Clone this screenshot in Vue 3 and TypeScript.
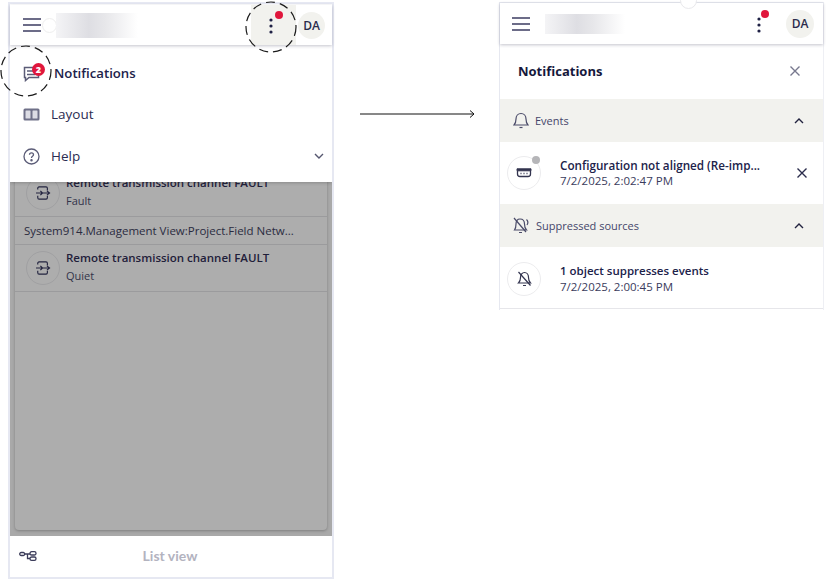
<script setup lang="ts">
const listRows = [
  { kind: 'item', title: 'Remote transmission channel FAULT', sub: 'Fault' },
  { kind: 'group', title: 'System914.Management View:Project.Field Netw...' },
  { kind: 'item', title: 'Remote transmission channel FAULT', sub: 'Quiet' },
]
</script>

<template>
  <div class="canvas">
    <section class="screen left">
      <header class="bar">
        <svg class="burger" width="18" height="14" viewBox="0 0 18 14"><path d="M0 1h18M0 7h18M0 13h18" /></svg>
        <span class="ghost"></span>
        <span class="logo"></span>
        <span class="spacer"></span>
        <span class="more active">
          <svg width="6" height="20" viewBox="0 0 6 20"><circle cx="3" cy="4" r="1.6" /><circle cx="3" cy="10" r="1.6" /><circle cx="3" cy="16" r="1.6" /></svg>
          <i class="dot"></i>
        </span>
        <span class="avatar">DA</span>
      </header>

      <div class="body">
        <div class="card">
          <template v-for="(r, i) in listRows" :key="i">
            <div v-if="r.kind === 'item'" class="li">
              <span class="li-icon">
                <svg width="16" height="14" viewBox="0 0 18 16" fill="none" stroke="#22233f" stroke-width="1.300">
                  <path d="M3 4V2.500C3 1.700 3.600 1 4.500 1h8c.8 0 1.500.7 1.500 1.500V5M3 11v2c0 1 .7 2 1.500 2h8c.8 0 1.500-.7 1.500-1.500V11" />
                  <path d="M1 8h15M13.500 5.500 16.500 8l-3 2.500M6 5.500 8.500 8 6 10.500" />
                </svg>
              </span>
              <span class="li-text"><b>{{ r.title }}</b><small>{{ r.sub }}</small></span>
            </div>
            <div v-else class="group">{{ r.title }}</div>
          </template>
        </div>

        <nav class="menu">
          <div class="menu-row first">
            <span class="menu-icon chat">
              <svg width="17" height="17" viewBox="0 0 17 17" fill="none" stroke="#5b5c77" stroke-width="1.500">
                <path d="M1.500 2.500h14v10H6l-3.500 3v-3h-1z" /><path d="M4 6h8M4 9.500h8" stroke-width="1.300" />
              </svg>
              <i class="count">2</i>
            </span>
            <span class="strong">Notifications</span>
          </div>
          <div class="menu-row">
            <span class="menu-icon">
              <svg width="17" height="13" viewBox="0 0 17 13"><rect x="0.500" y="0.500" width="16" height="12" rx="1.500" fill="#6f7088" /><rect x="2.500" y="2.500" width="5" height="8" rx=".5" fill="#dcdce4" /><rect x="9.500" y="2.500" width="5" height="8" rx=".5" fill="#dcdce4" /></svg>
            </span>
            <span>Layout</span>
          </div>
          <div class="menu-row">
            <span class="menu-icon">
              <svg width="17" height="17" viewBox="0 0 17 17" fill="none" stroke="#5b5c77" stroke-width="1.300"><circle cx="8.500" cy="8.500" r="7.500" /><path d="M6.500 6.800c0-1.200 1-2 2-2s2 .8 2 1.900c0 1.600-2 1.600-2 3.200" /><circle cx="8.500" cy="12.200" r=".6" fill="#5b5c77" /></svg>
            </span>
            <span>Help</span>
            <span class="spacer"></span>
            <svg class="chev" width="10" height="6" viewBox="0 0 10 6"><path d="M1 1l4 4 4-4" /></svg>
          </div>
        </nav>
      </div>

      <footer class="foot">
        <svg width="18" height="10" viewBox="0 0 18 10" fill="none" stroke="#3b3c5a" stroke-width="1.300">
          <rect x="0.700" y="1.500" width="5" height="3" rx="1.500" /><rect x="11" y="0.700" width="6" height="3.300" rx="1.600" /><rect x="11" y="6" width="6" height="3.300" rx="1.600" />
          <path d="M5.700 3h5.300M8.500 3v4.500H11" />
        </svg>
        <span class="foot-label">List view</span>
      </footer>
    </section>

    <svg class="ring ring-more" width="52" height="52" viewBox="0 0 52 52"><circle cx="26" cy="26" r="25" /></svg>
    <svg class="ring ring-note" width="52" height="52" viewBox="0 0 52 52"><circle cx="26" cy="26" r="25" /></svg>

    <svg class="arrow" width="115" height="10" viewBox="0 0 115 10" fill="none" stroke="#111" stroke-width="1">
      <path d="M0 5h114M110 1.500 114 5 110 8.500" />
    </svg>

    <section class="screen right">
      <i class="peek"></i>
      <header class="bar">
        <svg class="burger" width="18" height="14" viewBox="0 0 18 14"><path d="M0 1h18M0 7h18M0 13h18" /></svg>
        <span class="logo r"></span>
        <span class="spacer"></span>
        <span class="more">
          <svg width="6" height="20" viewBox="0 0 6 20"><circle cx="3" cy="4" r="1.600" /><circle cx="3" cy="10" r="1.600" /><circle cx="3" cy="16" r="1.600" /></svg>
          <i class="dot"></i>
        </span>
        <span class="avatar big">DA</span>
      </header>

      <div class="title-row">
        <span class="title">Notifications</span>
        <svg class="x light" width="10" height="10" viewBox="0 0 10 10"><path d="M.500.500l9 9M9.500.500l-9 9" /></svg>
      </div>

      <div class="section">
        <svg width="16" height="17" viewBox="0 0 16 17" fill="none" stroke="#4a4b68" stroke-width="1.200"><path d="M1 13h14c-1.500-1.500-2-2.500-2-6 0-3-2-5.500-5-5.500S3 4 3 7c0 3.500-.5 4.500-2 6z" /><path d="M6.500 15.500h3" /></svg>
        <span>Events</span>
        <span class="spacer"></span>
        <svg class="chev up" width="10" height="6" viewBox="0 0 10 6"><path d="M1 5l4-4 4 4" /></svg>
      </div>
      <div class="note first-note">
        <span class="note-icon">
          <svg width="16" height="10" viewBox="0 0 16 10" fill="none" stroke="#33344f"><path d="M1 .800h14v2H1z" fill="#33344f" /><path d="M1.500 3v3c0 1.500 1 2.500 2.500 2.500h8c1.500 0 2.500-1 2.500-2.500V3" stroke-width="1.300" /><path d="M4.500 5.500h1M7.500 5.500h1M10.500 5.500h1" stroke-width="1.500" /></svg>
          <i class="grey-dot"></i>
        </span>
        <span class="note-text"><b class="wide">Configuration not aligned (Re-imp...</b><small>7/2/2025, 2:02:47 PM</small></span>
        <span class="spacer"></span>
        <svg class="x" width="10" height="10" viewBox="0 0 10 10"><path d="M.500.500l9 9M9.500.500l-9 9" /></svg>
      </div>
      <div class="section">
        <svg width="17" height="17" viewBox="0 0 17 17" fill="none" stroke="#4a4b68" stroke-width="1.200"><path d="M1.500 13h12c-1.500-1.500-2-2.500-2-6 0-3-1.800-5-4.500-5S3 4 3 7c0 3.500-.5 4.500-1.500 6z" /><path d="M1 1l12 14M6 15.500h3M13.500 2.500c1.500 1.500 1.500 4 .5 5.500" /></svg>
        <span>Suppressed sources</span>
        <span class="spacer"></span>
        <svg class="chev up" width="10" height="6" viewBox="0 0 10 6"><path d="M1 5l4-4 4 4" /></svg>
      </div>
      <div class="note end">
        <span class="note-icon">
          <svg width="15" height="16" viewBox="0 0 15 16" fill="none" stroke="#33344f" stroke-width="1.200"><path d="M1.500 12h12c-1.500-1.500-2-2.500-2-5.500 0-3-1.800-5-4-5s-4 2-4 5c0 3-.5 4-2 5.500z" /><path d="M1.500 1l12 13.500M6 14.500h3" /></svg>
        </span>
        <span class="note-text"><b>1 object suppresses events</b><small>7/2/2025, 2:00:45 PM</small></span>
      </div>
    </section>
  </div>
</template>

<style scoped>
.canvas { position: relative; width: 826px; height: 581px; background: #fff; overflow: hidden; font-family: "Open Sans", "Noto Sans", sans-serif; color: #1f2145; }
.screen { position: absolute; z-index: 0; display: flex; flex-direction: column; box-sizing: border-box; background: #fff; }
.left { left: 8px; top: 2px; width: 326px; height: 577px; border: 2px solid #e6e8f2; padding-top: 1px; }
.right { left: 499px; top: 2px; width: 325px; height: 308px; border-left: 1px solid #e6e8f0; border-top: 1px solid #e6e8f0; border-right: 1px solid #eeeff4; }
.bar { display: flex; align-items: center; height: 40px; flex: none; padding-left: 13px; position: relative; z-index: 2; background: #fff; box-sizing: border-box; box-shadow: 0 1px 3px rgba(60, 60, 90, .3); }
.right .bar { height: 41px; padding-left: 12px; }
.burger { stroke: #3c3d62; stroke-width: 1.500; fill: none; flex: none; }
.ghost { width: 15px; height: 15px; border: 1px solid #eee; border-radius: 50%; box-sizing: border-box; margin-left: 1px; margin-right: -1px; flex: none; }
.logo { width: 82px; height: 25px; background: linear-gradient(90deg, #f4f4f6 0%, #dedee3 40%, #e7e7ea 60%, #fff 100%); flex: none; }
.logo.r { width: 80px; height: 20px; margin-left: 15px; }
.spacer { flex: 1; }
.more { position: relative; display: flex; align-items: center; justify-content: center; width: 46px; height: 40px; flex: none; }
.more svg { fill: #1f2145; margin-top: 2px; }
.more.active { background: #f2f2ee; width: 45px; margin-right: 2px; padding-right: 5px; box-sizing: border-box; }
.right .more { margin-right: 4px; }
.dot { position: absolute; left: 24px; top: 6px; width: 8px; height: 8px; border-radius: 50%; background: #e0163c; }
.right .dot { left: 25px; top: 6px; }
.avatar { width: 27px; height: 27px; border-radius: 50%; background: #f2f2ee; display: flex; align-items: center; justify-content: center; font-size: 12px; font-weight: 600; color: #2b2c4c; margin-right: 7px; flex: none; }
.avatar.big { width: 28px; height: 28px; margin-right: 9px; }
.body { position: relative; flex: 1; background: #a9a9a9; padding: 0 5px 6px 5px; display: flex; flex-direction: column; justify-content: flex-end; min-height: 0; overflow: hidden; box-sizing: border-box; }
.card { height: 100%; box-sizing: border-box; background: #adadad; border-radius: 0 0 4px 4px; box-shadow: 0 1px 3px rgba(0, 0, 0, .25); padding-top: 125px; }
.li { display: flex; align-items: center; height: 47px; border-bottom: 1px solid #9b9b9d; box-sizing: border-box; padding-left: 11px; padding-bottom: 1px; gap: 6px; }
.li-icon { width: 34px; height: 34px; border-radius: 50%; border: 1px solid #a0a0a2; display: flex; align-items: center; justify-content: center; box-sizing: border-box; flex: none; }
.li-text { display: flex; flex-direction: column; gap: 3px; line-height: 15px; padding-bottom: 3px; }
.li-text b { font-size: 11.500px; font-weight: 600; color: #1f203a; white-space: nowrap; }
.li-text small { font-size: 11px; color: #33344a; }
.group { height: 28px; line-height: 27px; padding-left: 9px; border-bottom: 1px solid #9b9b9d; box-sizing: border-box; font-size: 11.500px; color: #2a2b3f; white-space: nowrap; }
.menu { position: absolute; left: 0; right: 0; top: 0; height: 137px; background: #fff; box-shadow: 0 1px 3px rgba(60, 60, 60, .3); padding-top: 6px; box-sizing: border-box; display: flex; flex-direction: column; }
.menu-row { display: flex; align-items: center; height: 42px; padding-left: 13px; padding-right: 8px; font-size: 13.500px; font-weight: 500; color: #2b2c52; flex: none; }
.menu-icon { position: relative; width: 17px; height: 17px; margin-right: 11px; display: flex; align-items: center; justify-content: center; flex: none; }
.menu-row.first { padding-top: 2px; box-sizing: border-box; }
.menu-row.first .menu-icon { margin-right: 14px; }
.strong { font-weight: 600; font-size: 13.200px; color: #20224a; }
.count { position: absolute; left: 9px; top: -2px; width: 13px; height: 13px; border-radius: 50%; background: #e0163c; color: #fff; font-size: 9px; font-weight: 800; font-style: normal; line-height: 13px; text-align: center; }
.chev { fill: none; stroke: #55566f; stroke-width: 1.400; flex: none; }
.chev.up { stroke: #22233f; }
.foot { position: relative; display: flex; align-items: center; justify-content: center; height: 41px; flex: none; padding-bottom: 2px; box-sizing: border-box; }
.foot svg { position: absolute; left: 9px; top: 15px; }
.foot-label { font-family: Lato, sans-serif; font-weight: 700; font-size: 14px; color: #b3b3bf; margin-left: -2px; }
.ring { position: absolute; z-index: 5; fill: none; stroke: #1a1a1a; stroke-width: 1.200; stroke-dasharray: 9 5; }
.ring-more { left: 245px; top: 1px; }
.ring-note { left: 0; top: 45px; }
.arrow { position: absolute; left: 360px; top: 109px; }
.peek { position: absolute; left: 180px; top: -11px; width: 17px; height: 17px; border-radius: 50%; border: 1px solid #e9e9ec; background: #fff; box-sizing: border-box; z-index: 3; }
.title-row { display: flex; align-items: center; justify-content: space-between; height: 55px; flex: none; padding: 0 23px 2px 18px; box-sizing: border-box; }
.title { font-size: 13px; font-weight: 700; color: #16183c; }
.x { stroke: #2b2c4c; stroke-width: 1.400; fill: none; flex: none; }
.x.light { stroke: #77788e; }
.section { display: flex; align-items: center; gap: 6px; height: 43px; flex: none; background: #f2f2ee; padding: 0 19px 0 13px; font-size: 11px; color: #45466a; }
.note { display: flex; align-items: center; height: 62px; flex: none; padding: 0 16px 0 7px; box-sizing: border-box; }
.note.end { border-bottom: 1px solid #e6e6ea; padding-top: 3px; }
.note-icon { position: relative; width: 34px; height: 34px; border: 1px solid #ececee; border-radius: 50%; box-sizing: border-box; display: flex; align-items: center; justify-content: center; flex: none; margin-right: 19px; }
.grey-dot { position: absolute; left: 24px; top: -1px; width: 8px; height: 8px; border-radius: 50%; background: #b5b5b8; }
.note-text { display: flex; flex-direction: column; line-height: 16px; }
.note-text b { font-size: 11.500px; font-weight: 600; color: #20224a; white-space: nowrap; }
.note-text b.wide { font-size: 11.700px; }
.note-text small { font-size: 11.500px; color: #3a3b5c; }
</style>
